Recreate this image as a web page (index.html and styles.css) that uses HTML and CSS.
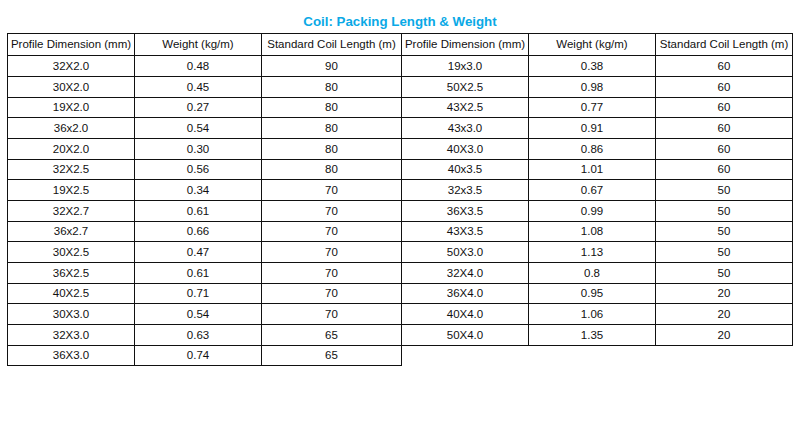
FILE: index.html
```html
<!DOCTYPE html>
<html>
<head>
<meta charset="utf-8">
<link rel="stylesheet" href="styles.css">
</head>
<body>
<div class="page">
  <h1 class="title">Coil: Packing Length &amp; Weight</h1>
  <div class="tables">
    <table class="spec spec-left">
      <colgroup><col class="c1"><col class="c2"><col class="c3"></colgroup>
      <thead>
        <tr class="head"><th>Profile Dimension (mm)</th><th>Weight (kg/m)</th><th>Standard Coil Length (m)</th></tr>
      </thead>
      <tbody>
        <tr><td>32X2.0</td><td>0.48</td><td>90</td></tr>
        <tr><td>30X2.0</td><td>0.45</td><td>80</td></tr>
        <tr><td>19X2.0</td><td>0.27</td><td>80</td></tr>
        <tr><td>36x2.0</td><td>0.54</td><td>80</td></tr>
        <tr><td>20X2.0</td><td>0.30</td><td>80</td></tr>
        <tr><td>32X2.5</td><td>0.56</td><td>80</td></tr>
        <tr><td>19X2.5</td><td>0.34</td><td>70</td></tr>
        <tr><td>32X2.7</td><td>0.61</td><td>70</td></tr>
        <tr><td>36x2.7</td><td>0.66</td><td>70</td></tr>
        <tr><td>30X2.5</td><td>0.47</td><td>70</td></tr>
        <tr><td>36X2.5</td><td>0.61</td><td>70</td></tr>
        <tr><td>40X2.5</td><td>0.71</td><td>70</td></tr>
        <tr><td>30X3.0</td><td>0.54</td><td>70</td></tr>
        <tr><td>32X3.0</td><td>0.63</td><td>65</td></tr>
        <tr><td>36X3.0</td><td>0.74</td><td>65</td></tr>
      </tbody>
    </table>
    <table class="spec spec-right">
      <colgroup><col class="c1"><col class="c2"><col class="c3r"></colgroup>
      <thead>
        <tr class="head"><th>Profile Dimension (mm)</th><th>Weight (kg/m)</th><th>Standard Coil Length (m)</th></tr>
      </thead>
      <tbody>
        <tr><td>19x3.0</td><td>0.38</td><td>60</td></tr>
        <tr><td>50X2.5</td><td>0.98</td><td>60</td></tr>
        <tr><td>43X2.5</td><td>0.77</td><td>60</td></tr>
        <tr><td>43x3.0</td><td>0.91</td><td>60</td></tr>
        <tr><td>40X3.0</td><td>0.86</td><td>60</td></tr>
        <tr><td>40x3.5</td><td>1.01</td><td>60</td></tr>
        <tr><td>32x3.5</td><td>0.67</td><td>50</td></tr>
        <tr><td>36X3.5</td><td>0.99</td><td>50</td></tr>
        <tr><td>43X3.5</td><td>1.08</td><td>50</td></tr>
        <tr><td>50X3.0</td><td>1.13</td><td>50</td></tr>
        <tr><td>32X4.0</td><td>0.8</td><td>50</td></tr>
        <tr><td>36X4.0</td><td>0.95</td><td>20</td></tr>
        <tr><td>40X4.0</td><td>1.06</td><td>20</td></tr>
        <tr><td>50X4.0</td><td>1.35</td><td>20</td></tr>
      </tbody>
    </table>
  </div>
</div>
</body>
</html>
```
FILE: styles.css
```css
html, body {
  margin: 0;
  padding: 0;
  background: #fff;
}
body {
  font-family: "Liberation Sans", Arial, sans-serif;
  color: #111;
}
.page {
  width: 800px;
  height: 423px;
  padding: 0 0 0 7px;
  box-sizing: border-box;
}
.title {
  margin: 0;
  height: 33px;
  box-sizing: border-box;
  padding-top: 13px;
  padding-right: 7px;
  font-size: 13.3px;
  line-height: 17px;
  font-weight: bold;
  color: #0aa9e6;
  text-align: center;
}
.tables {
  display: flex;
  align-items: flex-start;
}
.spec {
  border-collapse: collapse;
  table-layout: fixed;
  font-size: 11.5px;
}
.spec-right {
  margin-left: -1px;
}
.spec-left { width: 394px; }
.spec-right { width: 391px; }
.c1 { width: 127px; }
.c2 { width: 127px; }
.c3 { width: 140px; }
.c3r { width: 137px; }
.spec th, .spec td {
  border: 1px solid #111;
  padding: 0;
  text-align: center;
  vertical-align: middle;
  font-weight: normal;
  white-space: nowrap;
  height: 20px;
  line-height: 13px;
}
.spec tr.head th {
  height: 21px;
}
.spec tbody tr:nth-child(3n) td {
  height: 19px;
}
```
